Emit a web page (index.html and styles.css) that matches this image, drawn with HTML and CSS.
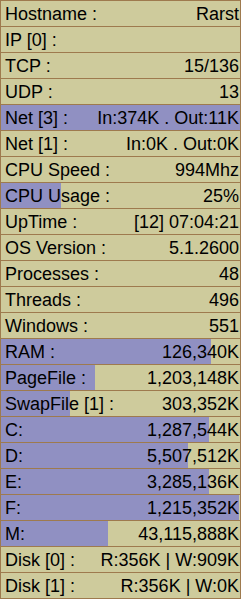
FILE: index.html
```html
<!DOCTYPE html>
<html>
<head>
    <link rel="stylesheet" href="styles.css">
</head>
<body>
    <div class="panel">
        <div class="row"><span class="label">Hostname :</span><span class="value">Rarst</span></div>
        <div class="row"><span class="label">IP [0] :</span><span class="value"></span></div>
        <div class="row"><span class="label">TCP :</span><span class="value">15/136</span></div>
        <div class="row"><span class="label">UDP :</span><span class="value">13</span></div>
        <div class="row bar" style="--p:100%"><span class="label">Net [3] :</span><span class="value">In:374K . Out:11K</span></div>
        <div class="row"><span class="label">Net [1] :</span><span class="value">In:0K . Out:0K</span></div>
        <div class="row"><span class="label">CPU Speed :</span><span class="value">994Mhz</span></div>
        <div class="row bar" style="--p:25%"><span class="label">CPU Usage :</span><span class="value">25%</span></div>
        <div class="row"><span class="label">UpTime :</span><span class="value">[12] 07:04:21</span></div>
        <div class="row"><span class="label">OS Version :</span><span class="value">5.1.2600</span></div>
        <div class="row"><span class="label">Processes :</span><span class="value">48</span></div>
        <div class="row"><span class="label">Threads :</span><span class="value">496</span></div>
        <div class="row"><span class="label">Windows :</span><span class="value">551</span></div>
        <div class="row bar" style="--p:87.9%"><span class="label">RAM :</span><span class="value">126,340K</span></div>
        <div class="row bar" style="--p:39.3%"><span class="label">PageFile :</span><span class="value">1,203,148K</span></div>
        <div class="row bar" style="--p:28.9%"><span class="label">SwapFile [1] :</span><span class="value">303,352K</span></div>
        <div class="row bar" style="--p:87%"><span class="label">C:</span><span class="value">1,287,544K</span></div>
        <div class="row bar" style="--p:78.4%"><span class="label">D:</span><span class="value">5,507,512K</span></div>
        <div class="row bar" style="--p:87%"><span class="label">E:</span><span class="value">3,285,136K</span></div>
        <div class="row bar" style="--p:99.5%"><span class="label">F:</span><span class="value">1,215,352K</span></div>
        <div class="row bar" style="--p:44.9%"><span class="label">M:</span><span class="value">43,115,888K</span></div>
        <div class="row"><span class="label">Disk [0] :</span><span class="value">R:356K | W:909K</span></div>
        <div class="row"><span class="label">Disk [1] :</span><span class="value">R:356K | W:0K</span></div>
    </div>
</body>
</html>
```

FILE: styles.css
```css
body {
    margin: 0;
    font-family: "Liberation Sans", Arial, sans-serif;
    font-size: 18px;
    color: #000;
    background: #cecb9c;
}
.panel {
    width: 241px;
    height: 599px;
    box-sizing: border-box;
    border: 1px solid #9e7a4e;
    border-bottom: none;
    background: #cecb9c;
    display: flex;
    flex-direction: column;
}
.row {
    box-sizing: border-box;
    height: 26px;
    flex-shrink: 0;
    border-bottom: 1px solid #9e7a4e;
    display: flex;
    align-items: center;
    justify-content: space-between;
    padding: 1px 1px 0 4px;
    white-space: nowrap;
}
.bar {
    background: linear-gradient(to right, #9090c2 var(--p), transparent var(--p));
}
```
